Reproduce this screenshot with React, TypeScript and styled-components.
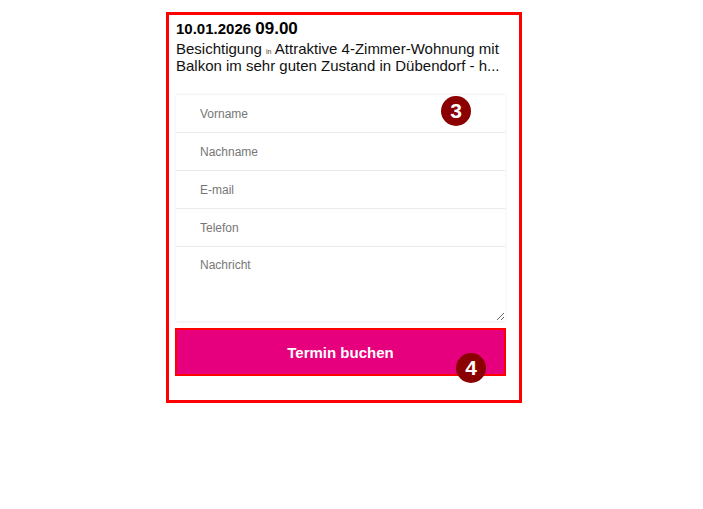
import styled, { createGlobalStyle } from 'styled-components';

const GlobalStyle = createGlobalStyle`
  body {
    margin: 8px;
    font-family: 'Liberation Sans', Arial, sans-serif;
    background: #fff;
    color: #111;
  }
`;

const Widget = styled.section`
  box-sizing: border-box;
  width: 356px;
  height: 391px;
  margin: 4px 0 0 158px;
  padding: 4px 14px 0 7px;
  border: 3px solid #ff0000;
`;

const DateLine = styled.div`
  font-weight: bold;
  font-size: 15px;
  line-height: 19px;
  color: #000;
`;

const Time = styled.span`
  font-size: 17px;
`;

const Title = styled.p`
  margin: 2px 0 0;
  font-size: 15px;
  line-height: 17px;
  color: #111;
`;

const Small = styled.span`
  font-size: 7px;
  line-height: 1;
  color: #4a3a20;
`;

const Form = styled.form`
  position: relative;
  margin-top: 20px;
  background: #fff;
  box-shadow: 0 1px 3px rgba(0, 0, 0, 0.08);
  border-top: 1px solid #f4f4f4;
`;

const Field = styled.input`
  box-sizing: border-box;
  display: block;
  width: 100%;
  height: 38px;
  padding: 0 0 0 24px;
  border: none;
  border-bottom: 1px solid #ebebeb;
  font-family: 'Liberation Sans', Arial, sans-serif;
  font-size: 12px;
  color: #333;
  outline: none;
  &::placeholder {
    color: #777;
  }
`;

const Message = styled.textarea`
  box-sizing: border-box;
  display: block;
  width: 100%;
  height: 74px;
  padding: 11px 0 0 24px;
  border: none;
  resize: vertical;
  font-family: 'Liberation Sans', Arial, sans-serif;
  font-size: 12px;
  outline: none;
  &::placeholder {
    color: #777;
  }
`;

const ButtonWrap = styled.div`
  position: relative;
  margin-top: 7px;
`;

const SubmitButton = styled.button`
  box-sizing: border-box;
  width: 331px;
  height: 48px;
  margin-left: -1px;
  border: 2px solid #ff0000;
  background: #e6007e;
  color: #fff;
  font-family: 'Liberation Sans', Arial, sans-serif;
  font-weight: bold;
  font-size: 15px;
  cursor: pointer;
`;

const Badge = styled.span<{ $top: number; $left: number }>`
  position: absolute;
  top: ${({ $top }) => $top}px;
  left: ${({ $left }) => $left}px;
  width: 30px;
  height: 30px;
  border-radius: 50%;
  background: #8b0000;
  color: #fff;
  font-family: 'Liberation Sans', Arial, sans-serif;
  font-weight: bold;
  font-size: 21px;
  line-height: 30px;
  text-align: center;
`;

export default function App() {
  return (
    <>
      <GlobalStyle />
      <Widget>
        <DateLine>
          10.01.2026 <Time>09.00</Time>
        </DateLine>
        <Title>
          Besichtigung <Small>in</Small> Attraktive 4-Zimmer-Wohnung mit
          Balkon im sehr guten Zustand in Dübendorf - h...
        </Title>
        <Form>
          <Field placeholder="Vorname" />
          <Field placeholder="Nachname" />
          <Field placeholder="E-mail" />
          <Field placeholder="Telefon" />
          <Message placeholder="Nachricht" />
          <Badge $top={1} $left={265}>3</Badge>
        </Form>
        <ButtonWrap>
          <SubmitButton type="button">Termin buchen</SubmitButton>
          <Badge $top={25} $left={280}>4</Badge>
        </ButtonWrap>
      </Widget>
    </>
  );
}
